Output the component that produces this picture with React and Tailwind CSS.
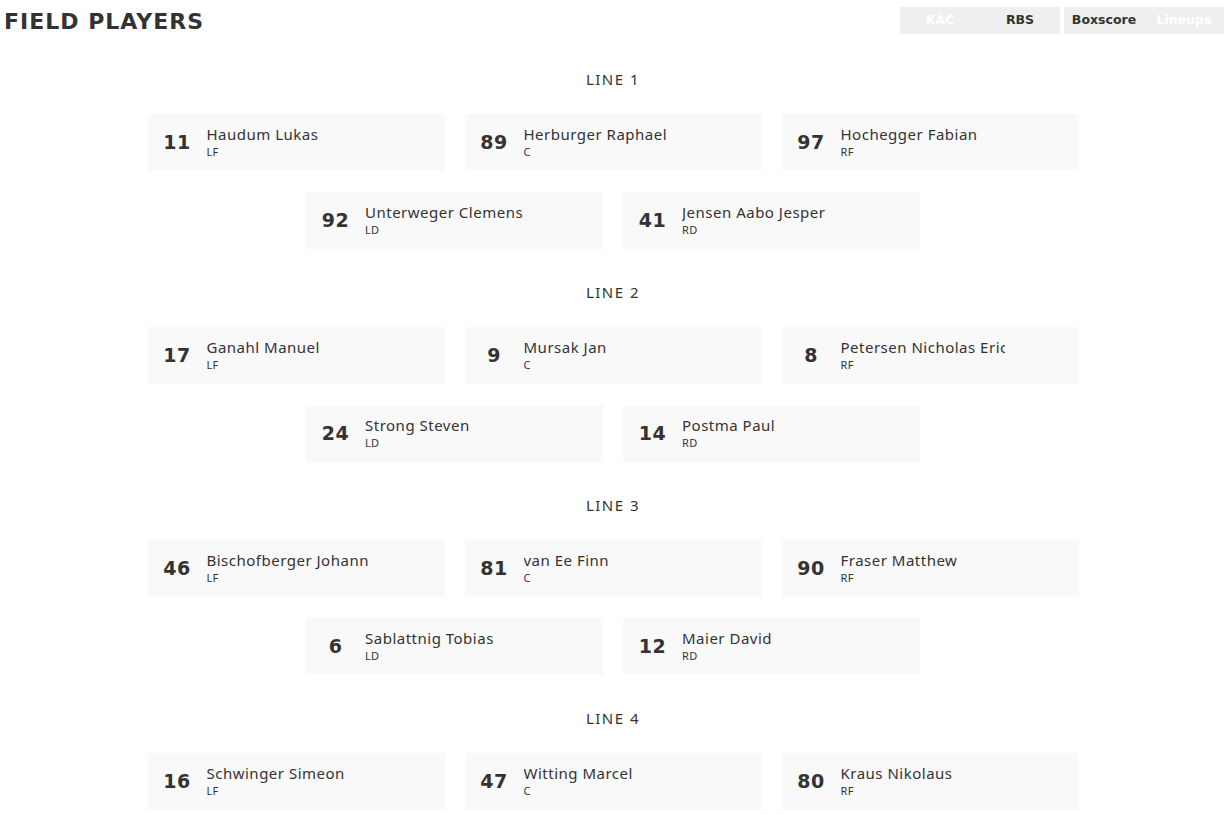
import React from "react";

const lines = [
    {
        label: "LINE 1",
        forwards: [
            { no: 11, name: "Haudum Lukas", pos: "LF" },
            { no: 89, name: "Herburger Raphael", pos: "C" },
            { no: 97, name: "Hochegger Fabian", pos: "RF" },
        ],
        defense: [
            { no: 92, name: "Unterweger Clemens", pos: "LD" },
            { no: 41, name: "Jensen Aabo Jesper", pos: "RD" },
        ],
    },
    {
        label: "LINE 2",
        forwards: [
            { no: 17, name: "Ganahl Manuel", pos: "LF" },
            { no: 9, name: "Mursak Jan", pos: "C" },
            { no: 8, name: "Petersen Nicholas Eric", pos: "RF" },
        ],
        defense: [
            { no: 24, name: "Strong Steven", pos: "LD" },
            { no: 14, name: "Postma Paul", pos: "RD" },
        ],
    },
    {
        label: "LINE 3",
        forwards: [
            { no: 46, name: "Bischofberger Johann", pos: "LF" },
            { no: 81, name: "van Ee Finn", pos: "C" },
            { no: 90, name: "Fraser Matthew", pos: "RF" },
        ],
        defense: [
            { no: 6, name: "Sablattnig Tobias", pos: "LD" },
            { no: 12, name: "Maier David", pos: "RD" },
        ],
    },
    {
        label: "LINE 4",
        forwards: [
            { no: 16, name: "Schwinger Simeon", pos: "LF" },
            { no: 47, name: "Witting Marcel", pos: "C" },
            { no: 80, name: "Kraus Nikolaus", pos: "RF" },
        ],
        defense: [],
    },
];

const wide = "font-['DejaVu_Sans',sans-serif]";
const body = "font-['Noto_Sans',sans-serif]";

function PlayerCard({ player }) {
    return (
        <div className="flex items-center w-[297px] h-[57px] bg-[#f9f9f9]">
            <div className={`w-[59px] text-center text-[19px] tracking-[0.5px] font-bold text-[#333] ${wide}`}>
                {player.no}
            </div>
            <div className={`w-[164px] pb-[2px] text-[#333] ${body}`}>
                <div className="overflow-hidden whitespace-nowrap text-[15px] leading-[20px] tracking-[0.5px]">
                    {player.name}
                </div>
                <div className="text-[11px] leading-[16px] tracking-[0.3px]">{player.pos}</div>
            </div>
        </div>
    );
}

function App() {
    return (
        <div className="w-[1231px] h-[815px] overflow-hidden bg-white text-[#333]">
            {/* header */}
            <div className="flex justify-between items-start h-[69px]">
                <h1 className={`pl-[4px] pt-[9px] text-[22px] leading-[26px] tracking-[1px] font-bold ${wide}`}>
                    FIELD PLAYERS
                </h1>
                <div className={`flex gap-[4px] mt-[7px] mr-[7px] text-[12.5px] font-bold ${wide}`}>
                    <div className="flex bg-[#efefef] h-[27px] items-center">
                        <span className="w-[80px] text-center text-white">KAC</span>
                        <span className="w-[80px] text-center">RBS</span>
                    </div>
                    <div className="flex bg-[#efefef] h-[27px] items-center">
                        <span className="w-[80px] text-center">Boxscore</span>
                        <span className="w-[80px] text-center text-white">Lineups</span>
                    </div>
                </div>
            </div>

            {/* lines */}
            <div className="flex flex-col gap-[33px] pr-[5px]">
                {lines.map((line) => (
                    <div key={line.label} className="flex flex-col items-center">
                        <div className={`h-[20px] leading-[20px] text-[15px] tracking-[1.5px] mb-[25px] ${body}`}>
                            {line.label}
                        </div>
                        <div className="flex flex-col items-center gap-[21px]">
                            <div className="flex gap-[20px]">
                                {line.forwards.map((p) => (
                                    <PlayerCard key={p.no} player={p} />
                                ))}
                            </div>
                            {line.defense.length > 0 && (
                                <div className="flex gap-[20px]">
                                    {line.defense.map((p) => (
                                        <PlayerCard key={p.no} player={p} />
                                    ))}
                                </div>
                            )}
                        </div>
                    </div>
                ))}
            </div>
        </div>
    );
}

export default App;
